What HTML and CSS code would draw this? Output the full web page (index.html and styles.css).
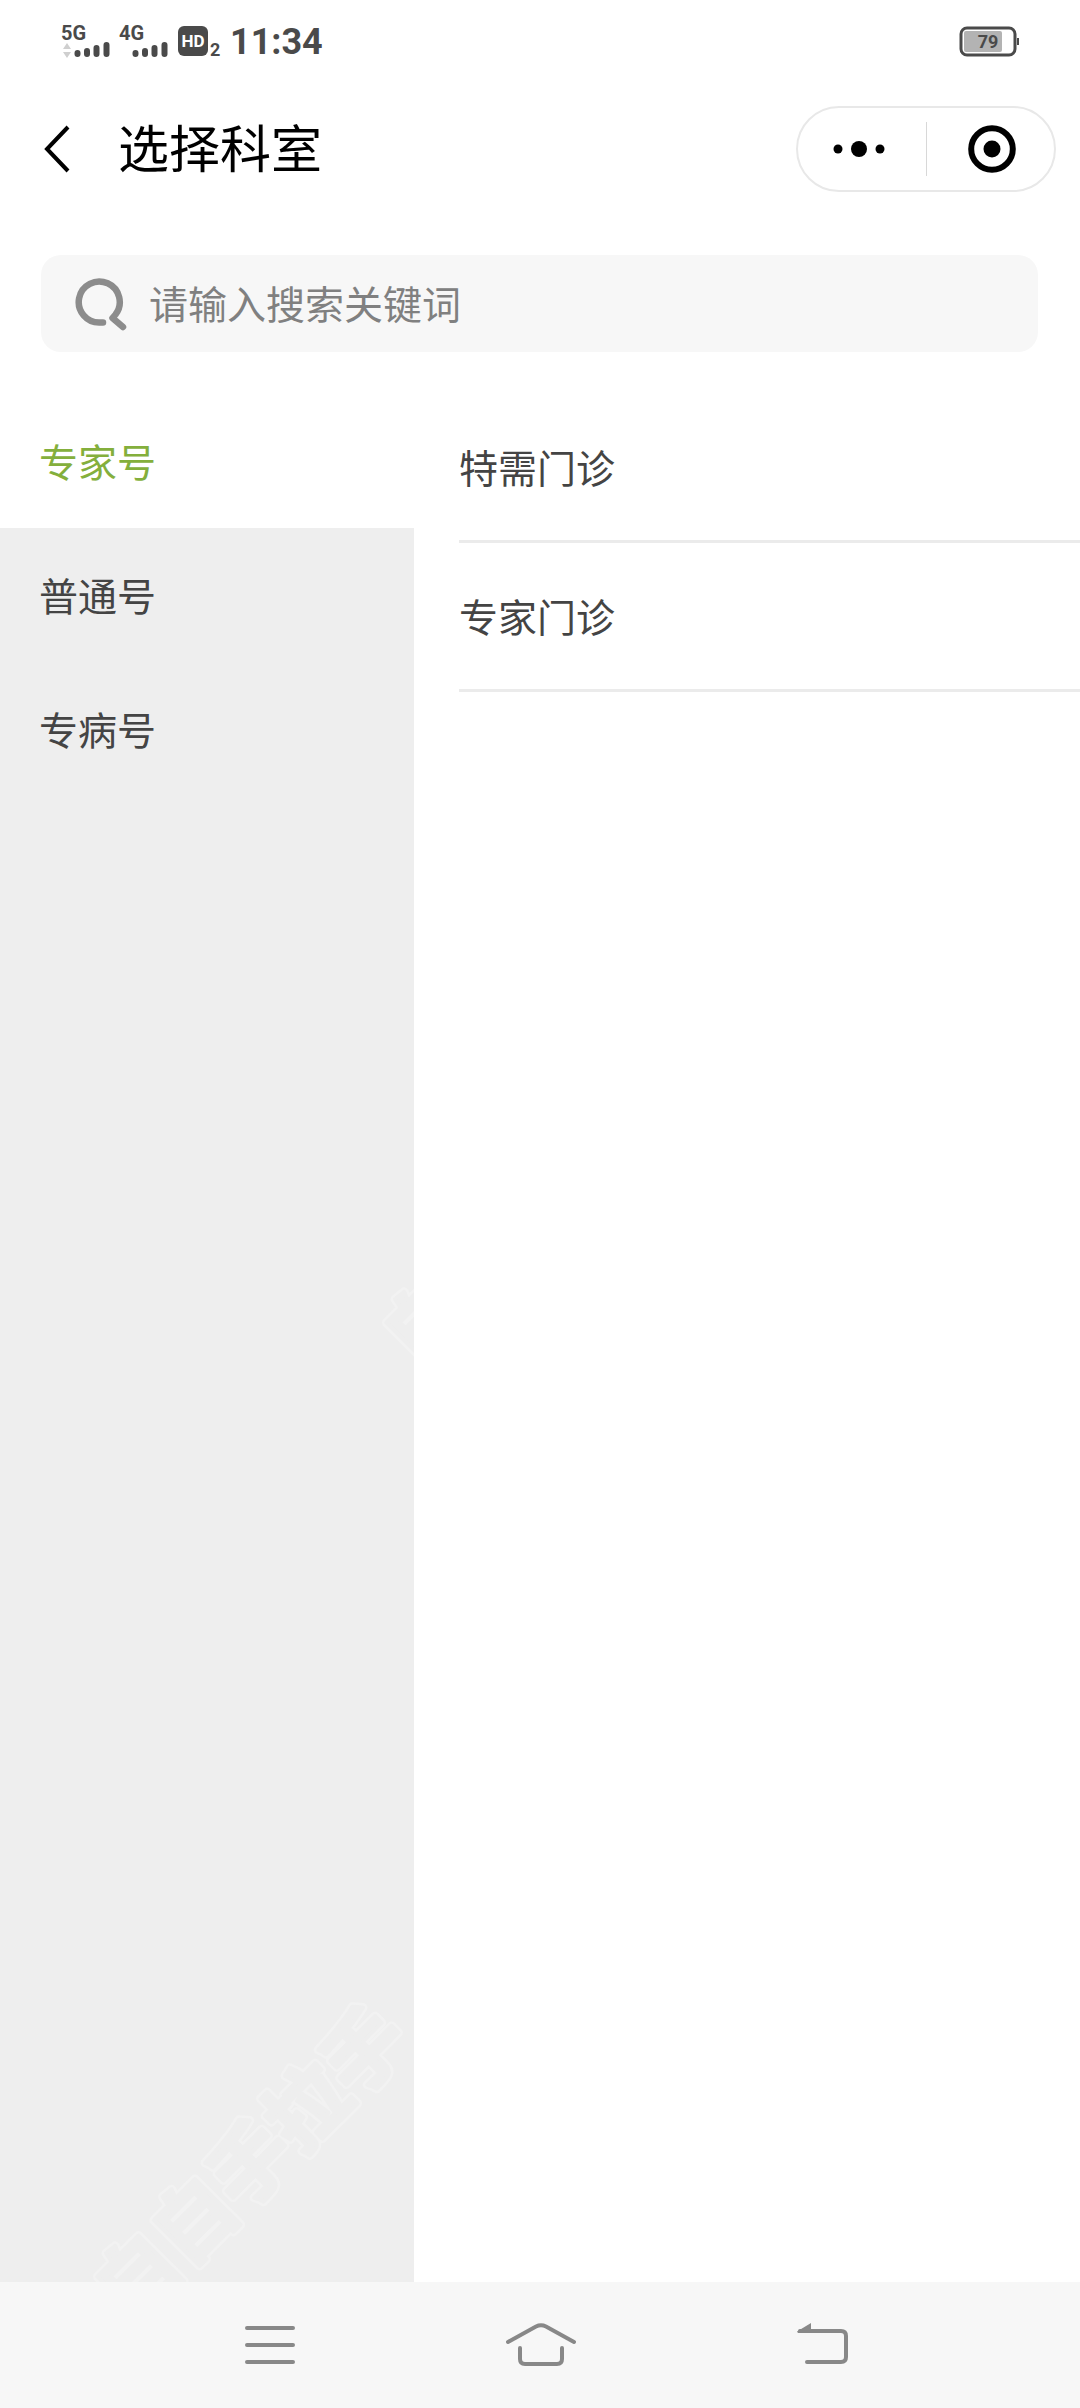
FILE: index.html
```html
<!DOCTYPE html>
<html lang="zh-CN">
<head>
    <meta charset="UTF-8">
    <meta name="viewport" content="width=device-width, initial-scale=1.0">
    <title>选择科室</title>
    <link rel="stylesheet" href="styles.css">
</head>
<body>

<div class="page">
    <div class="status-bar">
        <div class="status-left">
            <svg class="signal" width="56" height="56" viewBox="-4 -10 56 56">
                <text x="-1" y="17" class="net-label">5G</text>
                <path d="M1 26l4-6 4 6zM1 29h8l-4 6z" fill="#cfcfcf"/>
                <path d="M15.500 30v1M25 28v3M34.500 25v6M44.500 22v9" class="bars"/>
            </svg>
            <svg class="signal" width="56" height="56" viewBox="-4 -10 56 56">
                <text x="-1" y="17" class="net-label">4G</text>
                <path d="M15.500 30v1M25 28v3M34.500 25v6M44.500 22v9" class="bars"/>
            </svg>
            <svg class="hd" width="54" height="56" viewBox="-4 -11 54 56">
                <rect x="0" y="2" width="30" height="30" rx="6" fill="#4a4a4a"/>
                <text x="15" y="23" class="hd-label">HD</text>
                <text x="32" y="32" class="hd-sim">2</text>
            </svg>
            <span class="time">11:34</span>
        </div>
        <svg class="battery" width="62" height="32" viewBox="0 0 62 32">
            <rect x="2" y="3" width="54" height="27" rx="6" fill="#fff" stroke="#4a4a4a" stroke-width="3"/>
            <rect x="5" y="6" width="38" height="21" rx="2" fill="#b3b3b3"/>
            <path d="M59 13v7" stroke="#4a4a4a" stroke-width="2"/>
            <text x="29" y="23" class="battery-label">79</text>
        </svg>
    </div>

    <header class="header">
        <button type="button" class="back-btn" aria-label="返回">
            <svg width="28" height="50" viewBox="0 0 28 50">
                <path d="M25 3L4 25l21 22" fill="none" stroke="#000" stroke-width="4"/>
            </svg>
        </button>
        <h1>选择科室</h1>
        <div class="capsule">
            <button type="button" aria-label="更多">
                <svg width="60" height="54" viewBox="0 0 60 54">
                    <circle cx="6" cy="27" r="4.500"/>
                    <circle cx="27" cy="27" r="8"/>
                    <circle cx="48" cy="27" r="4.500"/>
                </svg>
            </button>
            <span class="capsule-line"></span>
            <button type="button" aria-label="关闭">
                <svg width="60" height="54" viewBox="0 0 60 54">
                    <circle cx="32" cy="27" r="20.800" fill="none" stroke="#000" stroke-width="6"/>
                    <circle cx="32" cy="27" r="8.500"/>
                </svg>
            </button>
        </div>
    </header>

    <form class="search">
        <svg width="54" height="56" viewBox="0 0 54 56">
            <path d="M28 46.500h-3a20.500 20.500 0 1 1 15.500-8L37.500 42l10.500 9" fill="none" stroke="#8c8c8c" stroke-width="6.500" stroke-linecap="round" stroke-linejoin="round"/>
        </svg>
        <input type="text" name="keyword" placeholder="请输入搜索关键词" aria-label="搜索">
    </form>

    <main class="content">
        <nav class="sidebar">
            <a href="#expert" class="active">专家号</a>
            <a href="#normal">普通号</a>
            <a href="#disease">专病号</a>
            <svg class="watermark" width="414" height="1080" viewBox="0 0 414 1080" aria-hidden="true">
                <g transform="translate(137 1074) rotate(-45)">
                    <text class="mark-outer" x="-40" y="30">自自手拉手</text>
                    <text class="mark-inner" x="-40" y="30">自自手拉手</text>
                </g>
                <g transform="translate(426 120) rotate(-45)">
                    <text class="mark-outer" x="-40" y="30">自自手拉手</text>
                    <text class="mark-inner" x="-40" y="30">自自手拉手</text>
                </g>
            </svg>
        </nav>
        <ul class="dept-list">
            <li><a href="#special-clinic">特需门诊</a></li>
            <li><a href="#expert-clinic">专家门诊</a></li>
        </ul>
    </main>

    <div class="system-nav">
        <button type="button" aria-label="菜单">
            <svg width="80" height="60" viewBox="0 0 80 60">
                <path d="M17 13h46M17 30h46M17 47h46"/>
            </svg>
        </button>
        <button type="button" aria-label="主页">
            <svg width="80" height="60" viewBox="0 0 80 60">
                <path d="M8 27L36 11.500q5-2.500 10 0L74 27M20 33v11q0 5 5 5h32q5 0 5-5V33"/>
            </svg>
        </button>
        <button type="button" aria-label="后退">
            <svg width="80" height="60" viewBox="0 0 80 60">
                <path d="M30 16h41q5 0 5 5v21q0 5-5 5H37"/>
                <path d="M27 16.500L41 8v10H28z" class="arrow"/>
            </svg>
        </button>
    </div>
</div>

</body>
</html>
```
FILE: styles.css
```css
* {
    box-sizing: border-box;
}

body {
    margin: 0;
    background-color: #fff;
    color: #444;
    font-family: "Noto Sans CJK SC", sans-serif;
}

button {
    display: flex;
    align-items: center;
    justify-content: center;
    padding: 0;
    border: none;
    background: none;
    cursor: pointer;
}

a {
    color: inherit;
    text-decoration: none;
}

svg {
    display: block;
    flex-shrink: 0;
}

.page {
    display: flex;
    flex-direction: column;
    min-height: 100vh;
}

/* Status bar */
.status-bar {
    display: flex;
    align-items: center;
    justify-content: space-between;
    height: 82px;
    padding: 0 59px 0 58px;
}

.status-left {
    display: flex;
    align-items: center;
    gap: 2px;
}

.net-label,
.hd-label,
.hd-sim,
.battery-label,
.time {
    font-family: Roboto, sans-serif;
    font-weight: bold;
    fill: #4a4a4a;
}

.net-label {
    font-size: 20px;
}

.bars {
    fill: none;
    stroke: #4a4a4a;
    stroke-width: 6;
    stroke-linecap: round;
}

.hd-label {
    font-size: 17px;
    fill: #fff;
    text-anchor: middle;
}

.hd-sim {
    font-size: 18px;
}

.time {
    padding-top: 2px;
    color: #4a4a4a;
    font-size: 36px;
    line-height: 40px;
}

.battery-label {
    font-size: 18px;
    text-anchor: middle;
}

/* Title bar */
.header {
    display: flex;
    align-items: center;
    height: 134px;
    padding: 0 24px 0 43px;
}

.header h1 {
    flex: 1;
    margin: 0 0 0 47px;
    padding-bottom: 6px;
    color: #000;
    font-size: 51px;
    font-weight: normal;
    line-height: 72px;
}

.capsule {
    display: flex;
    align-items: center;
    width: 260px;
    height: 86px;
    border: 2px solid #e8e8e8;
    border-radius: 43px;
}

.capsule button {
    flex: 1;
    height: 100%;
}

.capsule-line {
    width: 1px;
    height: 54px;
    background-color: #d8d8d8;
}

/* Search */
.search {
    display: flex;
    align-items: center;
    gap: 20px;
    height: 97px;
    margin: 39px 42px 42px 41px;
    padding: 0 32px 0 34px;
    border-radius: 20px;
    background-color: #f7f7f7;
}

.search input {
    flex: 1;
    min-width: 0;
    padding: 0 0 4px;
    border: none;
    outline: none;
    background: none;
    color: #444;
    font-family: inherit;
    font-size: 39px;
    line-height: 60px;
}

.search input::placeholder {
    color: #808080;
}

/* Departments */
.content {
    display: flex;
    flex: 1;
}

.sidebar {
    position: relative;
    display: flex;
    flex-direction: column;
    width: 414px;
    overflow: hidden;
    background-color: #eee;
}

.sidebar a {
    padding: 36px 39px 38px;
    font-size: 39px;
    line-height: 60px;
}

.sidebar .active {
    background-color: #fff;
    color: #84af3c;
}

.watermark {
    position: absolute;
    left: 0;
    bottom: 0;
    pointer-events: none;
}

.mark-outer,
.mark-inner {
    font-size: 80px;
    font-weight: bold;
    stroke-linejoin: round;
}

.mark-outer {
    fill: #f2f2f2;
    stroke: #f2f2f2;
    stroke-width: 9;
}

.mark-inner {
    fill: #eee;
    stroke: #eee;
    stroke-width: 4;
}

.dept-list {
    flex: 1;
    margin: 0 0 0 45px;
    padding: 0;
    list-style: none;
}

.dept-list li {
    border-bottom: 3px solid #ebebeb;
}

.dept-list a {
    display: block;
    padding: 42px 0 44px;
    font-size: 39px;
    line-height: 60px;
}

/* Bottom keys */
.system-nav {
    display: flex;
    align-items: center;
    justify-content: center;
    gap: 190px;
    height: 126px;
    background-color: #f7f7f7;
}

.system-nav path {
    fill: none;
    stroke: #888;
    stroke-width: 4;
    stroke-linecap: round;
}

.system-nav .arrow {
    fill: #888;
    stroke: none;
}
```
